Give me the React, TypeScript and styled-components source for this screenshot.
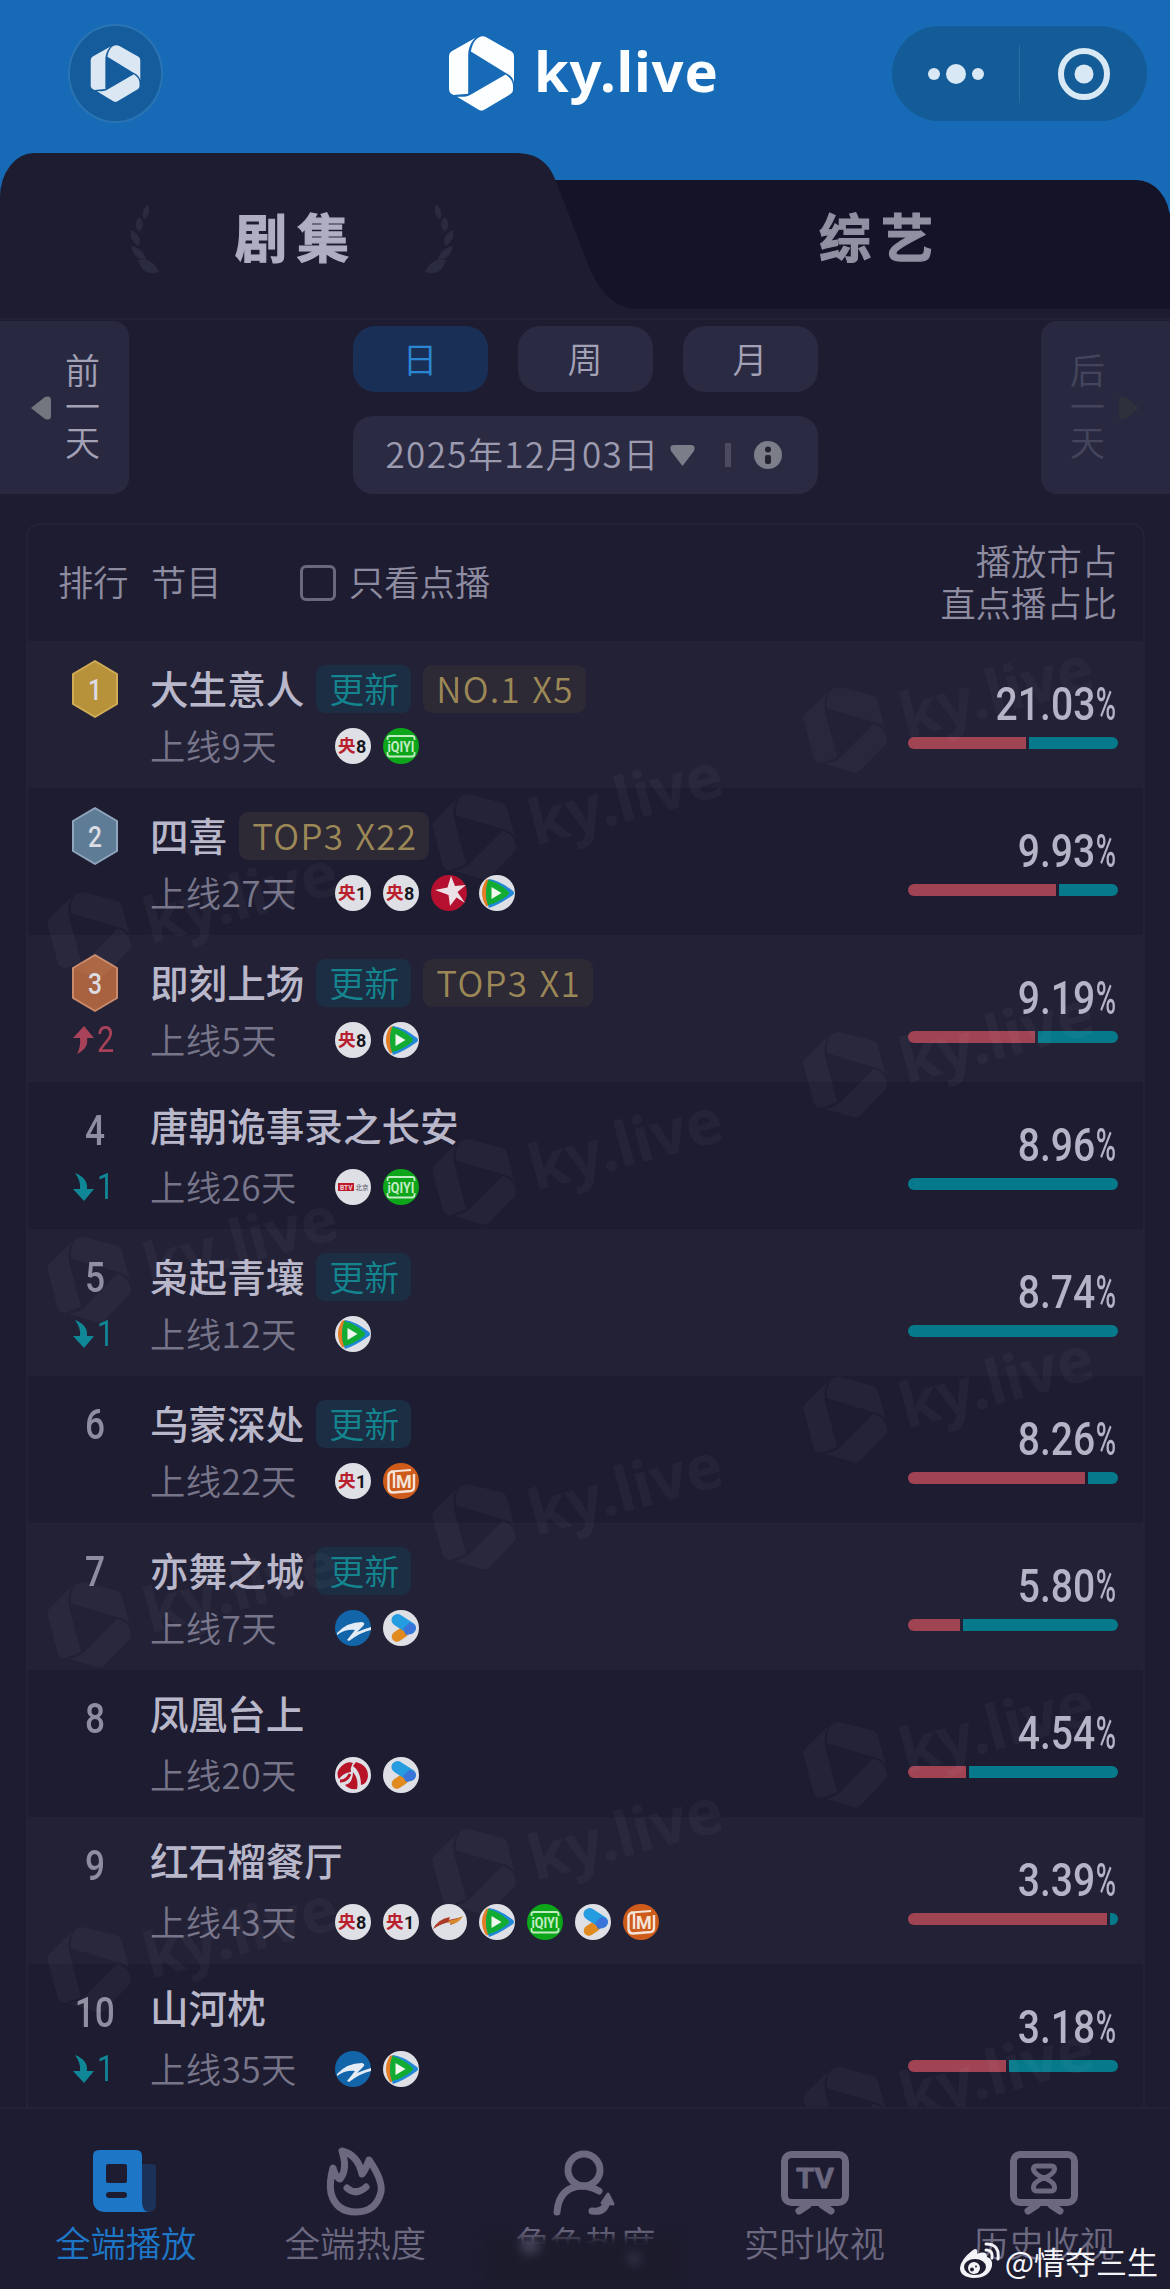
import React from 'react';
import styled, { createGlobalStyle } from 'styled-components';

const GlobalStyle = createGlobalStyle`
  * {
    box-sizing: border-box;
  }

  body {
    margin: 0;
    background: #1e1c30;
    font-family: 'Noto Sans CJK SC', 'Noto Sans', sans-serif;
  }
`;

const Page = styled.div`
  position: relative;
  width: 1170px;
  height: 2289px;
  overflow: hidden;
  background: #1e1c30;
`;

const Hero = styled.div`
  background: #176bb6;
`;

const Header = styled.header`
  display: flex;
  align-items: center;
  height: 153px;
  padding: 0 23px 6px 68px;
`;

const HomeButton = styled.button`
  display: flex;
  align-items: center;
  justify-content: center;
  width: 95px;
  height: 99px;
  padding: 0;
  border: 2px solid #2a74b4;
  border-radius: 50%;
  background: #145c9b;
  color: #dbe8f3;
`;

const Brand = styled.div`
  display: flex;
  align-items: center;
  margin-left: 286px;
  color: #fcfeff;
`;

const BrandName = styled.span`
  margin: -7px 0 0 20px;
  font-family: 'Noto Sans', sans-serif;
  font-size: 56px;
  font-weight: 700;
  line-height: 74px;
  letter-spacing: 0.8px;
`;

const Capsule = styled.div`
  display: flex;
  align-items: center;
  width: 255px;
  height: 95px;
  margin-left: auto;
  border-radius: 48px;
  background: #145c98;
`;

const CapsuleHalf = styled.div`
  display: flex;
  flex: 1;
  align-items: center;
  justify-content: center;
  height: 58px;

  & + & {
    border-left: 1px solid #2a6ca6;
  }
`;

const Tabs = styled.div`
  display: flex;
  height: 165px;
  background: linear-gradient(#176bb6 60px, #1e1c30 60px);
`;

const ActiveTab = styled.div`
  position: relative;
  z-index: 1;
  display: flex;
  align-items: center;
  gap: 71px;
  width: 515px;
  height: 165px;
  padding: 6px 0 0 129px;
  border-top-left-radius: 34px 44px;
  background: #1e1c30;
`;

const TabCurve = styled.svg`
  position: absolute;
  top: 0;
  left: 514px;
`;

const OtherTab = styled.div`
  flex: 1;
  height: 129px;
  margin-top: 27px;
  padding: 18px 0 0 304px;
  border-top-right-radius: 34px 40px;
  background: #151327;
`;

const TabTitle = styled.span<{ $dim?: boolean }>`
  width: 124px;
  margin-top: ${({ $dim }) => ($dim ? 0 : -6)}px;
  padding-left: ${({ $dim }) => ($dim ? 0 : 5)}px;
  color: ${({ $dim }) => ($dim ? '#918fa2' : '#b0aec2')};
  font-size: 52px;
  font-weight: 700;
  line-height: 76px;
  letter-spacing: 10px;
  white-space: nowrap;
  -webkit-text-stroke: 1.2px currentColor;
`;

const Controls = styled.section`
  display: flex;
  justify-content: space-between;
  height: 205px;
  padding-top: 1px;
  border-top: 2px solid #242238;
`;

const DayPanel = styled.button<{ $next?: boolean }>`
  display: flex;
  align-items: center;
  justify-content: flex-end;
  flex-direction: ${({ $next }) => ($next ? 'row-reverse' : 'row')};
  gap: 13px;
  width: 129px;
  height: 173px;
  padding: ${({ $next }) => ($next ? '0 0 0 29px' : '0 29px 0 0')};
  border: 0;
  border-radius: ${({ $next }) => ($next ? '16px 0 0 16px' : '0 16px 16px 0')};
  background: #282940;
  color: ${({ $next }) => ($next ? '#44455c' : '#a3a1b6')};
`;

const DayText = styled.span`
  width: 35px;
  margin-top: -6px;
  font-family: 'Noto Sans CJK SC', sans-serif;
  font-size: 35px;
  font-weight: 350;
  line-height: 36px;
`;

const Picker = styled.div`
  width: 465px;
  padding-top: 5px;
`;

const PeriodRow = styled.div`
  display: flex;
  gap: 30px;
  margin-bottom: 24px;
`;

const Period = styled.button<{ $active?: boolean }>`
  flex: 1;
  height: 66px;
  padding: 0 0 4px;
  border: 0;
  border-radius: 22px;
  background: ${({ $active }) => ($active ? '#1a2f55' : '#2a2a42')};
  color: ${({ $active }) => ($active ? '#2a86d2' : '#a3a1b6')};
  font-family: inherit;
  font-size: 35px;
  font-weight: 350;
`;

const DateBar = styled.div`
  display: flex;
  align-items: center;
  height: 78px;
  padding: 0 0 0 33px;
  border-radius: 20px;
  background: #2a2a42;
  color: #9c9aaf;
  font-size: 35px;
  font-weight: 350;
  letter-spacing: 1.4px;

  .date {
    &__text {
      width: 284px;
      padding-bottom: 5px;
      white-space: nowrap;
    }

    &__bar {
      width: 6px;
      height: 24px;
      margin: 0 23px 0 30px;
      background: #4b4a60;
    }
  }
`;

const Card = styled.section`
  position: relative;
  width: 1119px;
  margin-left: 26px;
  overflow: hidden;
  border: 2px solid #242238;
  border-bottom: 0;
  border-radius: 14px 14px 0 0;
`;

const CardHead = styled.div`
  display: flex;
  align-items: center;
  height: 116px;
  padding: 0 26px 5px 30px;
  color: #8e8ca0;
  font-size: 35.3px;
  font-weight: 350;
  line-height: 42px;

  .head {
    &__rank {
      width: 93px;
    }

    &__show {
      width: 149px;
    }

    &__share {
      margin-left: auto;
      text-align: right;
    }
  }
`;

const CheckBox = styled.span`
  width: 36px;
  height: 36px;
  margin: 4px 13px 0 0;
  border: 3px solid #6a687e;
  border-radius: 6px;
`;

const Row = styled.div<{ $alt: boolean }>`
  display: flex;
  height: 147px;
  padding: 0 25px 0 30px;
  background: ${({ $alt }) => ($alt ? '#232136' : '#1e1c30')};
`;

const RankCol = styled.div`
  display: flex;
  flex-direction: column;
  align-items: center;
  width: 73px;
  margin-right: 19px;
`;

const RankSlot = styled.div`
  display: flex;
  align-items: center;
  justify-content: center;
  height: 96px;
`;

const RankNumber = styled.span`
  color: #8f8da1;
  font-family: Roboto, sans-serif;
  font-size: 42px;
  font-weight: 500;
  transform: scaleX(0.84);
`;

const Trend = styled.div<{ $up: boolean }>`
  display: flex;
  align-items: center;
  gap: 3px;
  width: 100%;
  height: 20px;
  margin-top: -1px;
  padding-left: 14px;
  color: ${({ $up }) => ($up ? '#a84259' : '#108796')};
  font-family: Roboto, sans-serif;
  font-size: 36px;
`;

const TrendNumber = styled.span`
  transform: scaleX(0.85);
  transform-origin: left;
`;

const Info = styled.div`
  flex: 1;
`;

const TitleLine = styled.div<{ $tagged: boolean }>`
  display: flex;
  align-items: center;
  gap: 12px;
  height: ${({ $tagged }) => ($tagged ? 96 : 87)}px;
  margin-bottom: ${({ $tagged }) => ($tagged ? -15 : -6)}px;
`;

const Title = styled.span`
  margin-top: -4px;
  color: #b9b7ca;
  font-size: 38.6px;
  font-weight: 500;
  line-height: 50px;
`;

const Tag = styled.span<{ $gold?: boolean }>`
  height: 48px;
  padding: 0 12px 0 13px;
  border-radius: 9px;
  background: ${({ $gold }) => ($gold ? '#2d2935' : '#1b2e43')};
  color: ${({ $gold }) => ($gold ? '#9c8857' : '#14858f')};
  font-size: 35px;
  font-weight: 350;
  line-height: 45px;
  letter-spacing: ${({ $gold }) => ($gold ? 1.3 : 0)}px;
  word-spacing: ${({ $gold }) => ($gold ? 2 : 0)}px;
`;

const SubLine = styled.div`
  display: flex;
  align-items: center;
  height: 48px;
`;

const Days = styled.span`
  width: 185px;
  margin-top: -3px;
  color: #77758a;
  font-size: 35.3px;
  font-weight: 350;
  line-height: 46px;
  letter-spacing: 0.4px;
`;

const Platforms = styled.div`
  display: flex;
  gap: 12px;
`;

const Share = styled.div`
  width: 210px;
`;

const Percent = styled.div`
  display: flex;
  justify-content: flex-end;
  align-items: center;
  height: 54px;
  margin-top: 36px;
  padding: 0 2px 0 0;
  color: #b5b3c6;
  font-family: Roboto, sans-serif;
  font-size: 46px;
  font-weight: 500;
`;

const PercentDigits = styled.span`
  transform: scaleX(0.85);
  transform-origin: right;
`;

const PercentSign = styled.span`
  display: flex;
  justify-content: flex-end;
  width: 21px;
  transform: scaleX(0.6);
  transform-origin: right;
`;

const ShareBar = styled.div`
  display: flex;
  gap: 3px;
  height: 12px;
  margin-top: 6px;
  overflow: hidden;
  border-radius: 6px;
`;

const LivePart = styled.div`
  background: #a04454;
`;

const VodPart = styled.div`
  flex: 1;
  background: #067a8a;
`;

const Marks = styled.div`
  position: absolute;
  inset: 0;
  color: #fff;
  opacity: 0.03;
  pointer-events: none;
`;

const Mark = styled.div<{ $x: number; $y: number }>`
  position: absolute;
  top: ${({ $y }) => $y - 45}px;
  left: ${({ $x }) => $x - 40}px;
  display: flex;
  align-items: center;
  gap: 16px;
  height: 90px;
  font-family: 'Noto Sans', sans-serif;
  font-size: 62px;
  font-weight: 700;
  transform: rotate(-15deg);
  transform-origin: 40px 45px;
`;

const Nav = styled.nav`
  position: relative;
  display: flex;
  height: 182px;
  margin-top: -4px;
  padding: 0 11px;
  border-top: 2px solid #242238;
  background: #1e1c30;
`;

const NavItem = styled.div<{ $active?: boolean }>`
  display: flex;
  flex: 1;
  flex-direction: column;
  align-items: center;
  padding-top: 33px;
  color: ${({ $active }) => ($active ? '#1d76c6' : '#6b6880')};
  font-size: 35.3px;
  font-weight: 350;
  line-height: 46px;

  svg {
    margin-bottom: 1px;
  }
`;

const Smudge = styled.div`
  position: absolute;
  top: 128px;
  left: 486px;
  width: 194px;
  height: 46px;
  background:
    radial-gradient(circle at 44px 8px, #504e65 0, transparent 14px),
    radial-gradient(circle at 148px 22px, #38364c 0, transparent 10px),
    #1c1b2b;
  filter: blur(4px);
`;

const Signature = styled.div`
  position: absolute;
  right: 12px;
  bottom: 8px;
  display: flex;
  align-items: center;
  gap: 5px;
  color: #f4f4f8;
  font-size: 31px;
  line-height: 40px;
`;

const LogoMark = ({ width, height }: { width: number; height: number }) => (
  <svg width={width} height={height} viewBox="0 0 193 222" fill="currentColor">
    <path d="M79 5C64 18 57 38 57 60V171L14 175Q0 170 0 158V58Q0 50 8 45Z" />
    <path d="M65 46C68 28 75 10 90 3Q100 -2 112 4L186 46Q193 51 193 59V138C190 122 181 115 165 107Z" />
    <path d="M168 114C180 122 189 132 190 146V160Q190 168 183 172L106 218Q97 224 88 219L24 180C40 181 54 180 64 174Z" />
  </svg>
);

const Laurel = ({ flip }: { flip?: boolean }) => (
  <svg
    width="30"
    height="72"
    viewBox="0 0 30 72"
    fill="#2a2a40"
    transform={flip ? 'scale(-1 1)' : undefined}
  >
    <path d="M19 1Q23 10 15 17Q11 8 19 1Z" />
    <path d="M10 14Q18 21 10 29Q3 21 10 14Z" />
    <path d="M2 27Q13 32 10 43Q0 38 2 27Z" />
    <path d="M2 43Q15 45 17 57Q4 56 2 43Z" />
    <path d="M9 57Q23 54 30 69Q14 74 9 57Z" />
  </svg>
);

type Platform = 'c8' | 'c1' | 'iqiyi' | 'star' | 'tencent' | 'btv' | 'mango' | 'zj' | 'youku' | 'jsu' | 'dragon';

const PlatformIcon = ({ kind }: { kind: Platform }) => {
  const background: Partial<Record<Platform, string>> = {
    iqiyi: '#0da51a',
    star: '#b5102f',
    mango: '#cf5b1b',
    zj: '#1265a8',
  };

  return (
    <svg width="36" height="36" viewBox="0 0 36 36">
      <circle cx="18" cy="18" r="18" fill={background[kind] || '#dfdfe6'} />
      {(kind === 'c8' || kind === 'c1') && (
        <>
          <text x="3" y="24" fill="#b8202e" fontFamily="Noto Sans CJK SC" fontSize="17.5" fontWeight="700">
            央
          </text>
          <text x="21" y="24.500" fill="#16161c" fontFamily="Roboto" fontSize="18" fontWeight="700">
            {kind === 'c8' ? '8' : '1'}
          </text>
        </>
      )}
      {kind === 'iqiyi' && (
        <>
          <path d="M4.500 12V10Q4.500 8 7 8H29Q31.500 8 31.500 10V12M4.500 24V26Q4.500 28.500 7 28.500H29Q31.500 28.500 31.500 26V24" fill="none" stroke="#c3ecc4" strokeWidth="1.8" />
          <text x="4.500" y="23.500" fill="#c3ecc4" fontFamily="Roboto" fontSize="15" fontWeight="700" textLength="27" lengthAdjust="spacingAndGlyphs">
            iQIYI
          </text>
        </>
      )}
      {kind === 'star' && (
        <path d="M20 1L24 11L35 10L26.500 17L34 28L25.500 22.500L19 31L17.500 20L4 15L16.500 12.500Z" fill="#ecdfe5" />
      )}
      {kind === 'tencent' && (
        <>
          <path d="M7 5Q-1 18 7 31Q10 32 13 30V6Q10 3 7 5Z" fill="#e37c22" />
          <path d="M10 4Q4 18 10 33Q20 30 34 20Q36 18 34 16Q20 5 10 4Z" fill="#2188d8" />
          <path d="M9 5Q5 18 9 30Q19 28 29 20Q31 18 29 16Q19 7 9 5Z" fill="#12ac33" />
          <path d="M12.500 12V24L22.500 18Z" fill="#eef6ee" />
        </>
      )}
      {kind === 'btv' && (
        <>
          <rect x="3" y="14" width="16" height="8" fill="#bd1a2b" />
          <text x="5" y="20.500" fill="#f0d4d8" fontFamily="Roboto" fontSize="6.500" fontWeight="700">
            BTV
          </text>
          <text x="20.500" y="20.500" fill="#55555e" fontFamily="Noto Sans CJK SC" fontSize="6.500">
            北京
          </text>
        </>
      )}
      {kind === 'mango' && (
        <>
          <path d="M11 25V11Q11 8 8 9Q5.500 10 5.500 13V25Q6 29.500 10 29.500L28 28Q31 27.500 31 24V11" fill="none" stroke="#f3e3d8" strokeWidth="2.4" strokeLinejoin="round" />
          <path d="M8 8.500L28 7" fill="none" stroke="#f3e3d8" strokeWidth="2" />
          <text x="13" y="24.500" fill="#f3e3d8" fontFamily="Roboto" fontSize="18" fontWeight="700">
            M
          </text>
        </>
      )}
      {kind === 'zj' && (
        <path d="M2 23Q12 12 27 12Q31 13 28 16L22 22Q29 19 36 17V20Q26 22 14 31L12 30L20 20Q10 19 2 25Z" fill="#e3ebf5" />
      )}
      {kind === 'youku' && (
        <>
          <path d="M14 26.500L20 22.500" stroke="#e08a1f" strokeWidth="10.5" strokeLinecap="round" />
          <path d="M14.500 10L27 18" stroke="#259be0" strokeWidth="12" strokeLinecap="round" />
          <path d="M23 25Q33 24 33 17Q30 13 26 13L20 19Z" fill="#3a74d8" />
        </>
      )}
      {kind === 'jsu' && (
        <>
          <path d="M4 12Q11 3 18 6Q15 11 16 15Q8 16 4 22Q1 17 4 12Z" fill="#b71427" />
          <path d="M21 5Q33 8 33 19Q32 27 26 28Q26 15 18 9Z" fill="#b71427" />
          <path d="M18 15Q24 22 22 32Q14 33 10 28Q18 26 18 15Z" fill="#b71427" />
          <path d="M5 24Q12 24 15 17" fill="none" stroke="#b71427" strokeWidth="3" />
        </>
      )}
      {kind === 'dragon' && (
        <>
          <path d="M2 25Q7 15 19 13L18 16L31 13Q27 19 19 21L20 18Q11 19 2 25Z" fill="#ab3a26" />
          <path d="M17 17Q25 16 32 12Q27 20 20 20Z" fill="#d98a2d" />
        </>
      )}
    </svg>
  );
};

const medals = [
  { edge: '#cfab55', fill: '#b8923a' },
  { edge: '#8fa6bc', fill: '#5f7c96' },
  { edge: '#c98a6c', fill: '#a9623f' },
];

const Medal = ({ rank }: { rank: number }) => {
  const { edge, fill } = medals[rank - 1];

  return (
    <svg width="48" height="60" viewBox="0 0 48 60">
      <path d="M24 2L46 15V45L24 58L2 45V15Z" fill={fill} stroke={edge} strokeWidth="2" strokeLinejoin="round" />
      <text x="17" y="41" fill="#dcdce4" fontFamily="Roboto" fontSize="30" fontWeight="500" textLength="14" lengthAdjust="spacingAndGlyphs">
        {rank}
      </text>
    </svg>
  );
};

const TrendArrow = ({ up }: { up: boolean }) => (
  <svg width="22" height="28" viewBox="0 0 22 28" fill="currentColor">
    {up ? (
      <path d="M12 0L22 12H15Q17 22 5 28Q9 20 8 12H1Z" />
    ) : (
      <path d="M3 0Q16 5 15 16H22L12 28L1 16H8Q9 8 3 0Z" />
    )}
  </svg>
);

type Show = {
  title: string;
  days: number;
  share: string;
  live: number;
  platforms: Platform[];
  updated?: boolean;
  award?: string;
  trend?: number;
};

// live: width in px of the live broadcast part of the 210px bar
const shows: Show[] = [
  { title: '大生意人', days: 9, share: '21.03', live: 118, platforms: ['c8', 'iqiyi'], updated: true, award: 'NO.1 X5' },
  { title: '四喜', days: 27, share: '9.93', live: 148, platforms: ['c1', 'c8', 'star', 'tencent'], award: 'TOP3 X22' },
  { title: '即刻上场', days: 5, share: '9.19', live: 127, platforms: ['c8', 'tencent'], updated: true, award: 'TOP3 X1', trend: 2 },
  { title: '唐朝诡事录之长安', days: 26, share: '8.96', live: 0, platforms: ['btv', 'iqiyi'], trend: -1 },
  { title: '枭起青壤', days: 12, share: '8.74', live: 0, platforms: ['tencent'], updated: true, trend: -1 },
  { title: '乌蒙深处', days: 22, share: '8.26', live: 177, platforms: ['c1', 'mango'], updated: true },
  { title: '亦舞之城', days: 7, share: '5.80', live: 52, platforms: ['zj', 'youku'], updated: true },
  { title: '凤凰台上', days: 20, share: '4.54', live: 58, platforms: ['jsu', 'youku'] },
  { title: '红石榴餐厅', days: 43, share: '3.39', live: 199, platforms: ['c8', 'c1', 'dragon', 'tencent', 'iqiyi', 'youku', 'mango'] },
  { title: '山河枕', days: 35, share: '3.18', live: 98, platforms: ['zj', 'tencent'], trend: -1 },
];

const ShowRow = ({ show, rank }: { show: Show; rank: number }) => (
  <Row $alt={rank % 2 === 1}>
    <RankCol>
      <RankSlot>{rank <= 3 ? <Medal rank={rank} /> : <RankNumber>{rank}</RankNumber>}</RankSlot>
      {show.trend && (
        <Trend $up={show.trend > 0}>
          <TrendArrow up={show.trend > 0} />
          <TrendNumber>{Math.abs(show.trend)}</TrendNumber>
        </Trend>
      )}
    </RankCol>
    <Info>
      <TitleLine $tagged={Boolean(show.updated || show.award)}>
        <Title>{show.title}</Title>
        {show.updated && <Tag>更新</Tag>}
        {show.award && <Tag $gold>{show.award}</Tag>}
      </TitleLine>
      <SubLine>
        <Days>上线{show.days}天</Days>
        <Platforms>
          {show.platforms.map((kind) => (
            <PlatformIcon key={kind} kind={kind} />
          ))}
        </Platforms>
      </SubLine>
    </Info>
    <Share>
      <Percent>
        <PercentDigits>{show.share}</PercentDigits>
        <PercentSign>%</PercentSign>
      </Percent>
      <ShareBar>
        {show.live > 0 && <LivePart style={{ width: show.live }} />}
        <VodPart />
      </ShareBar>
    </Share>
  </Row>
);

const marks = [0, 1, 2, 3, 4].flatMap((i) => [
  { x: 818, y: 205 + i * 345 },
  { x: 447, y: 312 + i * 345 },
  { x: 62, y: 410 + i * 345 },
]);

const Watermarks = () => (
  <Marks>
    {marks.map(({ x, y }) => (
      <Mark key={`${x}-${y}`} $x={x} $y={y}>
        <LogoMark width={80} height={88} />
        ky.live
      </Mark>
    ))}
  </Marks>
);

const App = () => {
  return (
    <Page>
      <GlobalStyle />
      <Hero>
        <Header>
          <HomeButton>
            <LogoMark width={51} height={57} />
          </HomeButton>
          <Brand>
            <LogoMark width={65} height={75} />
            <BrandName>ky.live</BrandName>
          </Brand>
          <Capsule>
            <CapsuleHalf>
              <svg width="58" height="22" viewBox="0 0 58 22" fill="#d8e8f4">
                <circle cx="7" cy="11" r="6" />
                <circle cx="29" cy="11" r="10" />
                <circle cx="51" cy="11" r="6" />
              </svg>
            </CapsuleHalf>
            <CapsuleHalf>
              <svg width="54" height="54" viewBox="0 0 54 54">
                <circle cx="27" cy="27" r="23" fill="none" stroke="#d8e8f4" strokeWidth="6" />
                <circle cx="27" cy="27" r="9.500" fill="#d8e8f4" />
              </svg>
            </CapsuleHalf>
          </Capsule>
        </Header>
        <Tabs>
          <ActiveTab>
            <TabCurve width="126" height="165" viewBox="0 0 126 165">
              <path d="M0 0C24 0 35 10 42 28L73 109C85 138 98 156 126 156V165H0Z" fill="#1e1c30" />
            </TabCurve>
            <Laurel />
            <TabTitle>剧集</TabTitle>
            <Laurel flip />
          </ActiveTab>
          <OtherTab>
            <TabTitle $dim>综艺</TabTitle>
          </OtherTab>
        </Tabs>
      </Hero>
      <Controls>
        <DayPanel>
          <svg width="21" height="24" viewBox="0 0 21 24">
            <path d="M0 12L14 1Q20 -1 20 4V20Q20 25 14 23Z" fill="#73757f" />
          </svg>
          <DayText>前一天</DayText>
        </DayPanel>
        <Picker>
          <PeriodRow>
            <Period $active>日</Period>
            <Period>周</Period>
            <Period>月</Period>
          </PeriodRow>
          <DateBar>
            <span className="date__text">2025年12月03日</span>
            <svg width="25" height="21" viewBox="0 0 25 21">
              <path d="M12.500 21L1 6Q-1 0 4 0H21Q26 0 24 6Z" fill="#7b7d88" />
            </svg>
            <span className="date__bar" />
            <svg width="28" height="28" viewBox="0 0 28 28">
              <circle cx="14" cy="14" r="14" fill="#7b7d88" />
              <circle cx="14" cy="8.500" r="3" fill="#23232f" />
              <rect x="11" y="14" width="6" height="9" rx="2" fill="#23232f" />
            </svg>
          </DateBar>
        </Picker>
        <DayPanel $next>
          <svg width="21" height="24" viewBox="0 0 21 24">
            <path d="M21 12L7 1Q1 -1 1 4V20Q1 25 7 23Z" fill="#2c313c" />
          </svg>
          <DayText>后一天</DayText>
        </DayPanel>
      </Controls>
      <Card>
        <CardHead>
          <span className="head__rank">排行</span>
          <span className="head__show">节目</span>
          <CheckBox />
          <span>只看点播</span>
          <span className="head__share">
            播放市占
            <br />
            直点播占比
          </span>
        </CardHead>
        {shows.map((show, index) => (
          <ShowRow key={show.title} show={show} rank={index + 1} />
        ))}
        <Watermarks />
      </Card>
      <Nav>
        <NavItem $active>
          <svg width="68" height="76" viewBox="0 0 68 76">
            <path d="M50 22H60Q64 22 64 26V62Q64 70 56 70H50Z" fill="#1c3158" />
            <path d="M7 8H44Q50 8 50 14V60Q50 70 58 70H14Q1 70 1 58V14Q1 8 7 8Z" fill="#1d76c6" />
            <rect x="14" y="22" width="21" height="19" rx="2" fill="#1e1c30" />
            <rect x="14" y="50" width="21" height="6" rx="3" fill="#1e1c30" />
          </svg>
          全端播放
        </NavItem>
        <NavItem>
          <svg width="68" height="76" viewBox="0 0 68 76" fill="none" stroke="currentColor" strokeWidth="7" strokeLinecap="round" strokeLinejoin="round">
            <path d="M21 9Q37 13 41 32Q44 29 48 18Q62 38 60 50Q55 70 35 70Q15 70 10 51Q8 40 12 26Q15 36 19 37Q27 27 21 9Z" />
            <path d="M26 46Q35 54 45 45" />
          </svg>
          全端热度
        </NavItem>
        <NavItem>
          <svg width="68" height="76" viewBox="0 0 68 76" fill="none" stroke="currentColor" strokeWidth="7" strokeLinecap="round" strokeLinejoin="round">
            <circle cx="33" cy="28" r="16" />
            <path d="M6 70Q8 45 31 44Q39 44 48 49" />
            <path d="M41 69Q53 71 56 60" />
            <path d="M57 52L62 62L51 61Z" fill="currentColor" strokeWidth="3" />
          </svg>
          角色热度
        </NavItem>
        <NavItem>
          <svg width="68" height="76" viewBox="0 0 68 76" fill="none" stroke="currentColor" strokeWidth="7" strokeLinecap="round" strokeLinejoin="round">
            <rect x="3.500" y="12.500" width="61" height="48" rx="7" />
            <path d="M18 69L27 63M50 69L41 63" />
            <text x="15" y="46" fill="currentColor" stroke="currentColor" strokeWidth="0.8" fontFamily="Roboto" fontSize="28" fontWeight="700" textLength="38" lengthAdjust="spacingAndGlyphs">
              TV
            </text>
          </svg>
          实时收视
        </NavItem>
        <NavItem>
          <svg width="68" height="76" viewBox="0 0 68 76" fill="none" stroke="currentColor" strokeWidth="7" strokeLinecap="round" strokeLinejoin="round">
            <rect x="3.500" y="12.500" width="61" height="48" rx="7" />
            <path d="M18 69L27 63M50 69L41 63" />
            <path d="M27 24H41Q46 24 44 29Q42 33 34 36Q26 39 24 43Q22 49 27 49H41Q46 49 44 43Q42 39 34 36Q26 33 24 29Q22 24 27 24Z" strokeWidth="5" />
          </svg>
          历史收视
        </NavItem>
        <Smudge />
      </Nav>
      <Signature>
        <svg width="41" height="38" viewBox="0 0 41 38">
          <path d="M14 8Q19 5 18 12Q28 8 28 15Q34 17 33 24Q30 36 15 36Q1 35 1 26Q2 17 14 8Z" fill="#f4f4f8" />
          <ellipse cx="16" cy="25" rx="11" ry="8" fill="#1e1c30" />
          <circle cx="15" cy="26" r="6" fill="#f4f4f8" />
          <circle cx="13" cy="27.500" r="2" fill="#1e1c30" />
          <circle cx="17" cy="24.500" r="1" fill="#1e1c30" />
          <path d="M27 8Q34 8 33 16M27 2Q41 2 39 17" fill="none" stroke="#f4f4f8" strokeWidth="3" strokeLinecap="round" />
        </svg>
        @情夺三生
      </Signature>
    </Page>
  );
};

export default App;
